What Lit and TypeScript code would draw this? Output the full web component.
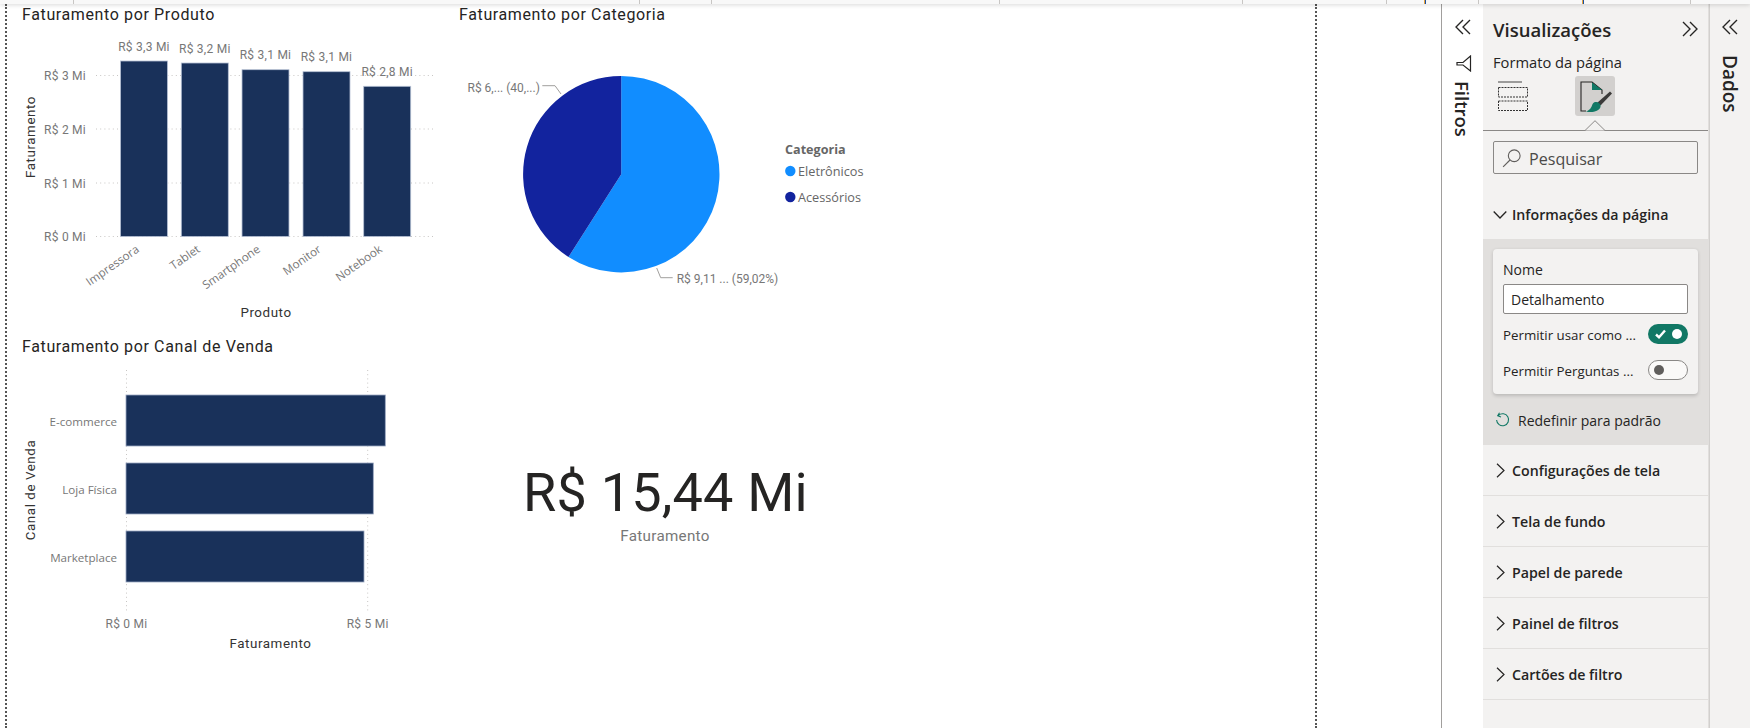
import { LitElement, html, css, svg } from "lit";
import { customElement } from "lit/decorators.js";

const BAR = "#19315a";
const products = [
  { name: "Impressora", label: "R$ 3,3 Mi", x: 120.5, top: 61, ex: 140, ey: 251 },
  { name: "Tablet", label: "R$ 3,2 Mi", x: 181.3, top: 63, ex: 201, ey: 251 },
  { name: "Smartphone", label: "R$ 3,1 Mi", x: 242, top: 69.7, ex: 261, ey: 251 },
  { name: "Monitor", label: "R$ 3,1 Mi", x: 303, top: 71.7, ex: 322, ey: 251 },
  { name: "Notebook", label: "R$ 2,8 Mi", x: 363.7, top: 86.3, ex: 383, ey: 251 },
];
const ticks = [
  { label: "R$ 3 Mi", y: 75.5 },
  { label: "R$ 2 Mi", y: 129 },
  { label: "R$ 1 Mi", y: 183 },
  { label: "R$ 0 Mi", y: 236.5 },
];
const channels = [
  { name: "E-commerce", end: 385.3, y: 395 },
  { name: "Loja Física", end: 373.3, y: 463 },
  { name: "Marketplace", end: 364, y: 531 },
];
const sections = ["Configurações de tela", "Tela de fundo", "Papel de parede", "Painel de filtros", "Cartões de filtro"];
const rulerTicks = [72.5, 639, 711, 999, 1241.5, 1385.5, 1478, 1690];
const rulerMarks = [1423.5, 1581.5];

const chevrons = html`<svg class="dbl" viewBox="0 0 16 16"><path d="M8 1 1 8l7 7M15 1 8 8l7 7"/></svg>`;
const chevronsRight = html`<svg class="dbl" viewBox="0 0 16 16"><path d="M8 1l7 7-7 7M1 1l7 7-7 7"/></svg>`;
const chevronRight = html`<svg class="chev-r" viewBox="0 0 9 15"><path d="M1 .7 8 7.5 1 14.3"/></svg>`;

@customElement("app-root")
export class AppRoot extends LitElement {
  static styles = css`
    :host { display: block; width: 1750px; height: 728px; overflow: hidden; background: #fff; font-family: "Open Sans", "Noto Sans", sans-serif; color: #252423; }
    .strip { position: relative; height: 4px; background: #f8f8f8; box-shadow: 0 1px 4px rgba(0,0,0,.16); z-index: 2; }
    .tick { position: absolute; top: 0; width: 1px; height: 4px; background: #c8c6c4; }
    .mark { position: absolute; top: 0; width: 2px; height: 4px; background: linear-gradient(90deg, #e8a33d 50%, #1a4fa0 50%); }
    .main { display: flex; height: 724px; }
    .canvas { width: 1441px; flex: none; padding-left: 5px; box-sizing: border-box; }
    .page { width: 1312px; height: 724px; box-sizing: border-box; border-left: 2px dotted #555; border-right: 2px dotted #555; display: grid; grid-template-columns: 443px 450px; grid-template-rows: 316px 408px; }
    .page svg { display: block; }
    .t { font-family: Roboto, sans-serif; }
    .title { font-size: 16px; fill: #252423; letter-spacing: .62px; }
    .axis { font-size: 13.4px; fill: #333; letter-spacing: .55px; }
    .val { font-size: 12px; fill: #777; letter-spacing: .25px; }
    .tight { letter-spacing: 0; }
    .cat { font-family: "Open Sans", sans-serif; font-size: 11.6px; fill: #777; }
    .leg { font-family: "Open Sans", sans-serif; font-size: 12.7px; fill: #666; }
    .legh { font-family: "Open Sans", sans-serif; font-size: 12.6px; font-weight: 700; fill: #666; }
    .big { font-size: 54px; fill: #252423; letter-spacing: .2px; }
    .sub { font-size: 15.2px; fill: #777; letter-spacing: .3px; }

    .dbl { width: 16px; height: 16px; display: block; fill: none; stroke: #252423; stroke-width: 1.35; }
    .rail { flex: none; box-sizing: border-box; display: flex; flex-direction: column; align-items: center; }
    .filters { width: 42px; border-left: 1px solid #a19f9d; padding-top: 15px; background: #fff; }
    .funnel { width: 16px; height: 17px; margin: 20px 0 9px 2px; display: block; fill: none; stroke: #252423; stroke-width: 1.2; }
    .vert { writing-mode: vertical-rl; font-weight: 600; font-size: 18.5px; line-height: 22px; }
    .filters .vert { margin-right: 2px; }
    .data { width: 41px; border-left: 1px solid #d2d0ce; padding-top: 15px; background: #f3f2f1; }
    .data .vert { margin-top: 20px; font-size: 19px; }

    .viz { width: 226px; flex: none; box-sizing: border-box; background: #f3f2f1; border-right: 1px solid #e1dfdd; }
    .viz-head { height: 50px; display: flex; align-items: center; justify-content: space-between; padding: 0 10px; }
    .viz-title { font-size: 18.5px; font-weight: 600; }
    .fmt { height: 16px; line-height: 16px; padding-left: 10px; font-size: 14.7px; }
    .tabs { position: relative; height: 61px; box-sizing: border-box; padding-top: 6px; border-bottom: 1px solid #8a8886; display: flex; }
    .tab { width: 40px; height: 40px; border-radius: 3px; }
    .tab svg { display: block; }
    .tab-a { margin-left: 11px; }
    .tab-b { margin-left: 41px; background: #d2d0ce; }
    .notch { position: absolute; left: 101px; bottom: -1px; width: 22px; height: 11px; fill: #f3f2f1; stroke: #8a8886; }
    .search { margin: 10px 10px 0; height: 33px; box-sizing: border-box; border: 1px solid #8a8886; border-radius: 2px; display: flex; align-items: center; padding-top: 2px; font-size: 16.1px; color: #4b4a48; }
    .search svg { width: 20px; height: 20px; margin: -2px 7px 0 8px; fill: none; stroke: #605e5c; stroke-width: 1; }
    .info { height: 65px; box-sizing: border-box; display: flex; align-items: flex-end; padding: 0 0 12px 10px; font-size: 14.2px; font-weight: 600; line-height: 24px; }
    .chev-d { width: 14px; height: 24px; margin-right: 5px; fill: none; stroke: #252423; stroke-width: 1.3; }
    .grey { height: 206px; box-sizing: border-box; background: #e1dfdd; padding-top: 10px; }
    .card { margin: 0 10px; height: 145px; box-sizing: border-box; padding: 10px; background: #f3f2f1; border-radius: 4px; box-shadow: 0 1.6px 3.6px rgba(0,0,0,.16); font-size: 14px; }
    .lbl { line-height: 22px; height: 20px; }
    .input { margin-top: 5px; height: 30px; box-sizing: border-box; border: 1px solid #8a8886; border-radius: 2px; background: #fff; padding-left: 7px; line-height: 30px; }
    .row { display: flex; justify-content: space-between; align-items: center; height: 20px; margin-top: 10px; white-space: nowrap; font-size: 13.3px; }
    .row + .row { margin-top: 16px; }
    .row-text { padding-top: 2px; }
    .tog { width: 40px; height: 20px; box-sizing: border-box; border-radius: 10px; display: flex; align-items: center; flex: none; }
    .tog-on { background: #117865; justify-content: space-between; padding: 0 6px 0 7px; }
    .tog-on svg { width: 11px; height: 10px; fill: none; stroke: #fff; stroke-width: 2.4; }
    .tog-off { border: 1px solid #8a8886; background: #faf9f8; padding-left: 5px; }
    .dot { width: 10px; height: 10px; border-radius: 50%; background: #fff; }
    .tog-off .dot { background: #605e5c; }
    .reset { height: 51px; display: flex; align-items: center; padding-left: 12px; font-size: 14px; }
    .reset-text { padding-top: 2px; }
    .reset svg { width: 15px; height: 15px; margin-right: 8px; fill: none; stroke: #117865; stroke-width: 1.1; }
    .sec { height: 51px; box-sizing: border-box; border-bottom: 1px solid #e1dfdd; display: flex; align-items: center; padding-left: 13px; font-size: 14.2px; font-weight: 600; padding-top: 1px; }
    .chev-r { width: 9px; height: 15px; margin-right: 7px; fill: none; stroke: #252423; stroke-width: 1.2; flex: none; }
  `;

  barChart() {
    return html`<svg width="443" height="316" viewBox="7 4 443 316">
      <text class="t title" x="22" y="20">Faturamento por Produto</text>
      ${ticks.map((t) => svg`
        <line x1="96" x2="435" y1=${t.y} y2=${t.y} stroke="#c8c6c4" stroke-dasharray="1 3.2"/>
        <text class="t val" x="86" y=${t.y + 4.5} text-anchor="end">${t.label}</text>`)}
      ${products.map((p) => svg`
        <rect x=${p.x} y=${p.top} width="47" height=${236.5 - p.top} fill=${BAR} stroke="#b6c0d4" stroke-width=".8"/>
        <text class="t val" x=${p.x + 23.5} y=${p.top - 10.5} text-anchor="middle">${p.label}</text>
        <text class="cat" text-anchor="end" transform="translate(${p.ex} ${p.ey}) rotate(-35)">${p.name}</text>`)}
      <text class="t axis" text-anchor="middle" transform="translate(35 137) rotate(-90)">Faturamento</text>
      <text class="t axis" x="266" y="317" text-anchor="middle">Produto</text>
    </svg>`;
  }

  pieChart() {
    return html`<svg width="450" height="316" viewBox="450 4 450 316">
      <text class="t title" x="459" y="20">Faturamento por Categoria</text>
      <path d="M621.2 76A98.2 98.2 0 1 1 568.5 257L621.2 174.200Z" fill="#118dff"/>
      <path d="M621.2 76A98.2 98.2 0 0 0 568.5 257L621.2 174.200Z" fill="#12239e"/>
      <path d="M542.3 85.7H555L561 94M656.7 268 660.7 277.7H672.7" fill="none" stroke="#a19f9d"/>
      <text class="t val tight" x="467.5" y="91.5">R$ 6,... (40,...)</text>
      <text class="t val tight" x="676.7" y="283">R$ 9,11 ... (59,02%)</text>
      <text class="legh" x="785" y="153.5">Categoria</text>
      <circle cx="790.3" cy="171" r="5.2" fill="#118dff"/>
      <text class="leg" x="798" y="175.5">Eletrônicos</text>
      <circle cx="790.3" cy="197" r="5.2" fill="#12239e"/>
      <text class="leg" x="798" y="201.5">Acessórios</text>
    </svg>`;
  }

  channelChart() {
    return html`<svg width="443" height="408" viewBox="7 320 443 408">
      <text class="t title" x="22" y="352">Faturamento por Canal de Venda</text>
      <line x1="126.5" x2="126.5" y1="370" y2="613" stroke="#c8c6c4" stroke-dasharray="1 3.2"/>
      <line x1="367.7" x2="367.7" y1="370" y2="613" stroke="#c8c6c4" stroke-dasharray="1 3.2"/>
      ${channels.map((c) => svg`
        <rect x="126" y=${c.y} width=${c.end - 126} height="51" fill=${BAR} stroke="#9aa7c0" stroke-width=".8"/>
        <text class="cat" x="117" y=${c.y + 31} text-anchor="end">${c.name}</text>`)}
      <text class="t val" x="126.5" y="628" text-anchor="middle">R$ 0 Mi</text>
      <text class="t val" x="367.7" y="628" text-anchor="middle">R$ 5 Mi</text>
      <text class="t axis" x="270.5" y="648" text-anchor="middle">Faturamento</text>
      <text class="t axis" text-anchor="middle" transform="translate(35 490) rotate(-90)">Canal de Venda</text>
    </svg>`;
  }

  cardVisual() {
    return html`<svg width="450" height="408" viewBox="450 320 450 408">
      <text class="t big" x="665.5" y="511" text-anchor="middle">R$ 15,44 Mi</text>
      <text class="t sub" x="665" y="541" text-anchor="middle">Faturamento</text>
    </svg>`;
  }

  render() {
    return html`
      <div class="strip">
        ${rulerTicks.map((x) => html`<span class="tick" style="left:${x}px"></span>`)}
        ${rulerMarks.map((x) => html`<span class="mark" style="left:${x}px"></span>`)}
      </div>
      <div class="main">
        <div class="canvas">
          <div class="page">
            ${this.barChart()}${this.pieChart()}${this.channelChart()}${this.cardVisual()}
          </div>
        </div>
        <div class="rail filters">
          ${chevrons}
          <svg class="funnel" viewBox="0 0 16 17"><path d="M14.5 1v15L7 10H1V7.5h6z"/></svg>
          <div class="vert">Filtros</div>
        </div>
        <div class="viz">
          <div class="viz-head"><span class="viz-title">Visualizações</span>${chevronsRight}</div>
          <div class="fmt">Formato da página</div>
          <div class="tabs">
            <div class="tab tab-a">
              <svg width="40" height="40" viewBox="0 0 40 40"><path d="M4 6H28" stroke="#444" fill="none"/><path d="M4.500 11.500H33.500V21H4.500ZM4.500 25H33.500V34.500H4.500Z" fill="none" stroke="#333" stroke-dasharray="2 1"/></svg>
            </div>
            <div class="tab tab-b">
              <svg width="40" height="40" viewBox="0 0 40 40">
                <path d="M11 35H6V6H17L27 14V18" fill="none" stroke="#252423" stroke-width="1.1"/>
                <path d="M17 6.500 27 14H17Z" fill="#117865"/>
                <path d="M35 15.500 37 17.500 25.500 29.500 22 27Z" fill="#3b3a39"/>
                <path d="M20 26C24 26 26 28 25.500 31 24 35.500 17 37 11 35.500 15 34 16 32 17 29.500 17.500 27.500 18.500 26.500 20 26Z" fill="#117865"/>
              </svg>
            </div>
            <svg class="notch" viewBox="0 0 22 11"><path d="M0 10.500H1L11 .7 21 10.500H22"/></svg>
          </div>
          <div class="search">
            <svg viewBox="0 0 18 18"><circle cx="11" cy="7" r="5.300"/><path d="M7.200 10.800 1 17"/></svg>
            Pesquisar
          </div>
          <div class="info">
            <svg class="chev-d" viewBox="0 0 14 24"><path d="M.7 8.500 7 15l6.300-6.500"/></svg>
            Informações da página
          </div>
          <div class="grey">
            <div class="card">
              <div class="lbl">Nome</div>
              <div class="input">Detalhamento</div>
              <div class="row">
                <span class="row-text">Permitir usar como ...</span>
                <span class="tog tog-on"><svg viewBox="0 0 11 10"><path d="M1 5.500 4 8.300 10 1.500"/></svg><span class="dot"></span></span>
              </div>
              <div class="row">
                <span class="row-text">Permitir Perguntas ...</span>
                <span class="tog tog-off"><span class="dot"></span></span>
              </div>
            </div>
            <div class="reset">
              <svg viewBox="0 0 15 15"><path d="M3.500 3.300A6 6 0 1 1 1.600 8M4.500.7 2.700 3.700 6 5"/></svg>
              <span class="reset-text">Redefinir para padrão</span>
            </div>
          </div>
          ${sections.map((s) => html`<div class="sec">${chevronRight}${s}</div>`)}
        </div>
        <div class="rail data">
          ${chevrons}
          <div class="vert">Dados</div>
        </div>
      </div>
    `;
  }
}
